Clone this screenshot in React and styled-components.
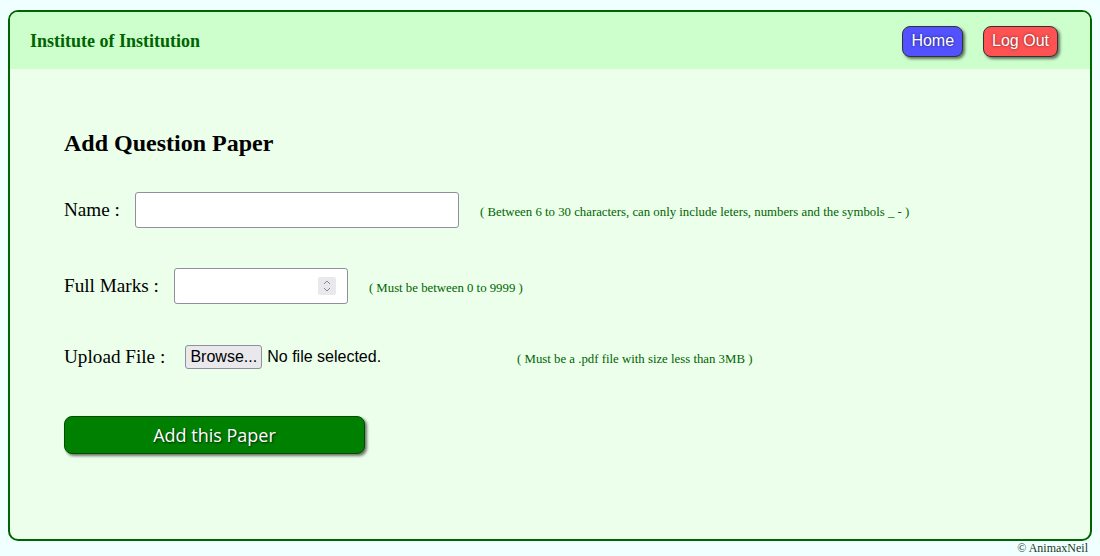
import React from 'react';
import styled, { createGlobalStyle } from 'styled-components';

const GlobalStyle = createGlobalStyle`
  html, body {
    margin: 0;
    background-color: #f0ffff;
  }
  body {
    padding: 10px 8px 0 8px;
    font-family: "Liberation Serif", "Times New Roman", serif;
  }
`;

// Outer framed panel
const Frame = styled.div`
  border: 2px solid #006400;
  border-radius: 10px;
  height: 527px;
  background-color: #ebffeb;
  overflow: hidden;
  display: flex;
  flex-direction: column;
`;

const Header = styled.header`
  height: 57px;
  background-color: #ccffcc;
  display: flex;
  align-items: center;
  justify-content: space-between;
  padding: 0 32px 0 20px;
`;

const Brand = styled.div`
  color: #006400;
  font-weight: bold;
  font-size: 18px;
  margin-top: 2px;
`;

const Nav = styled.nav`
  display: flex;
  gap: 20px;
  margin-top: 1px;
`;

const NavButton = styled.button`
  font-family: "Liberation Sans", Arial, sans-serif;
  font-size: 16px;
  color: white;
  text-shadow: 0 0 3px rgba(0, 0, 0, 0.6);
  background-color: ${({ $color }) => $color};
  border: 1px solid #333;
  border-radius: 8px;
  height: 31px;
  padding: 0 8px;
  box-shadow: 2px 2px 3px rgba(0, 0, 0, 0.55);
`;

const Content = styled.main`
  padding: 61px 54px 0 54px;
`;

const Title = styled.h2`
  margin: 0 0 35px 0;
  font-size: 24px;
  font-weight: bold;
  color: #000;
`;

const Row = styled.div`
  display: flex;
  align-items: center;
  height: 36px;
  margin-bottom: ${({ $gap }) => $gap}px;
`;

const Label = styled.label`
  font-size: 19.2px;
  color: #000;
  margin-right: ${({ $space }) => $space}px;
`;

const TextInput = styled.input`
  box-sizing: border-box;
  width: 324px;
  height: 36px;
  border: 1px solid #8f8f9d;
  border-radius: 3px;
  background: white;
`;

const NumberBox = styled.div`
  box-sizing: border-box;
  width: 174px;
  height: 36px;
  border: 1px solid #8f8f9d;
  border-radius: 3px;
  background: white;
  display: flex;
  align-items: center;
  padding-right: 11px;
`;

const NumberField = styled.input`
  flex: 1;
  min-width: 0;
  border: none;
  outline: none;
  height: 100%;
  background: transparent;
`;

const Spinner = styled.div`
  width: 18px;
  height: 18px;
  background: #e9e9ed;
  border-radius: 2px;
  display: flex;
  align-items: center;
  justify-content: center;
`;

const FileButton = styled.button`
  font-family: "Liberation Sans", Arial, sans-serif;
  font-size: 16px;
  color: #000;
  background: #e9e9ed;
  border: 1px solid #8f8f9d;
  border-radius: 3px;
  height: 24px;
  width: 77px;
  padding: 0;
`;

const FileText = styled.span`
  font-family: "Liberation Sans", Arial, sans-serif;
  font-size: 16px;
  color: #000;
  margin-left: 5px;
`;

const Hint = styled.span`
  font-size: 12.8px;
  color: #006400;
  margin-left: ${({ $space }) => $space}px;
  margin-top: 4px;
`;

const SubmitButton = styled.button`
  width: 301px;
  height: 38px;
  background-color: #008000;
  border: 1px solid #004d00;
  border-radius: 8px;
  color: white;
  font-family: "Open Sans", "DejaVu Sans", sans-serif;
  font-size: 18px;
  text-shadow: 1px 1px 2px rgba(0, 0, 0, 0.7);
  box-shadow: 2px 2px 3px rgba(0, 0, 0, 0.55);
  margin-top: 1px;
`;

const Footer = styled.footer`
  text-align: right;
  font-size: 12px;
  color: #1a3a1a;
  padding-right: 4px;
  line-height: 14px;
`;

const SpinIcon = () => (
  <svg width="10" height="14" viewBox="0 0 10 14">
    <path d="M2 5 L5 2 L8 5" fill="none" stroke="#888" strokeWidth="1" />
    <path d="M2 9 L5 12 L8 9" fill="none" stroke="#888" strokeWidth="1" />
  </svg>
);

const App = () => (
  <>
    <GlobalStyle />
    <Frame>
      <Header>
        <Brand>Institute of Institution</Brand>
        <Nav>
          <NavButton $color="#5252ff">Home</NavButton>
          <NavButton $color="#ff5252">Log Out</NavButton>
        </Nav>
      </Header>
      <Content>
        <Title>Add Question Paper</Title>

        {/* Name */}
        <Row $gap={40}>
          <Label $space={15}>Name :</Label>
          <TextInput type="text" />
          <Hint $space={21}>( Between 6 to 30 characters, can only include leters, numbers and the symbols _ - )</Hint>
        </Row>

        {/* Full marks */}
        <Row $gap={35}>
          <Label $space={15}>Full Marks :</Label>
          <NumberBox>
            <NumberField type="text" />
            <Spinner><SpinIcon /></Spinner>
          </NumberBox>
          <Hint $space={21}>( Must be between 0 to 9999 )</Hint>
        </Row>

        {/* Upload */}
        <Row $gap={40}>
          <Label $space={20}>Upload File :</Label>
          <FileButton type="button">Browse...</FileButton>
          <FileText>No file selected.</FileText>
          <Hint $space={136}>( Must be a .pdf file with size less than 3MB )</Hint>
        </Row>

        <SubmitButton type="submit">Add this Paper</SubmitButton>
      </Content>
    </Frame>
    <Footer>© AnimaxNeil</Footer>
  </>
);

export default App;
